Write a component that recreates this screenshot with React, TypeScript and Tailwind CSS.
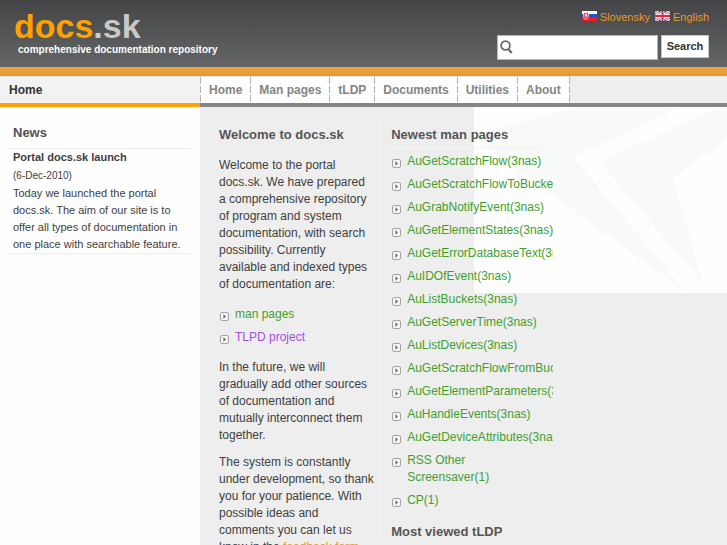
import type { ReactNode } from 'react';

type BulletLinkProps = {
  href?: string;
  className?: string;
  children: ReactNode;
};

const navItems = ['Home', 'Man pages', 'tLDP', 'Documents', 'Utilities', 'About'];

const manPages = [
  'AuGetScratchFlow(3nas)',
  'AuGetScratchFlowToBucket(3nas)',
  'AuGrabNotifyEvent(3nas)',
  'AuGetElementStates(3nas)',
  'AuGetErrorDatabaseText(3nas)',
  'AuIDOfEvent(3nas)',
  'AuListBuckets(3nas)',
  'AuGetServerTime(3nas)',
  'AuListDevices(3nas)',
  'AuGetScratchFlowFromBucket(3nas)',
  'AuGetElementParameters(3nas)',
  'AuHandleEvents(3nas)',
  'AuGetDeviceAttributes(3nas)',
  'RSS Other Screensaver(1)',
  'CP(1)',
];

function SlovakFlag() {
  return (
    <svg className="mb-[3px]" width="15" height="10" viewBox="0 0 15 10" aria-hidden="true">
      <rect width="15" height="10" fill="#ffffff" />
      <rect y="3" width="15" height="4" fill="#2457c5" />
      <rect y="7" width="15" height="3" fill="#ee1c25" />
      <path d="M1.5 1.5h5v4c0 1.6-1.2 2.4-2.5 3-1.3-.6-2.5-1.4-2.5-3z" fill="#e8323c" stroke="#fff" strokeWidth=".6" />
      <path d="M4 2.3v4M2.9 3.4h2.2M2.5 4.9h3" stroke="#fff" strokeWidth=".8" />
    </svg>
  );
}

function BritishFlag() {
  return (
    <svg className="mb-[3px]" width="15" height="10" viewBox="0 0 15 10" aria-hidden="true">
      <rect width="15" height="10" fill="#3a54a4" />
      <path d="M0 0l15 10M15 0L0 10" stroke="#ffffff" strokeWidth="2.8" />
      <path d="M0 0l15 10M15 0L0 10" stroke="#e2405a" strokeWidth="1" />
      <path d="M7.5 0v10M0 5h15" stroke="#ffffff" strokeWidth="3.6" />
      <path d="M7.5 0v10M0 5h15" stroke="#dc2840" strokeWidth="2" />
    </svg>
  );
}

function SearchIcon() {
  return (
    <svg className="mb-[2px] shrink-0" width="13" height="14" viewBox="0 0 13 14" fill="none" stroke="#686868" aria-hidden="true">
      <circle cx="5.5" cy="5.5" r="4.4" strokeWidth="1.7" />
      <path d="M8.3 9l3.4 4" strokeWidth="2.2" />
    </svg>
  );
}

function BulletIcon() {
  return (
    <svg className="mt-[6px] shrink-0" width="9" height="9" viewBox="0 0 9 9" aria-hidden="true">
      <rect x=".5" y=".5" width="8" height="8" rx="1.5" fill="#f6f6f6" stroke="#a3a3a3" />
      <path d="M3.4 2.3L6.2 4.5 3.4 6.7z" fill="#707070" />
    </svg>
  );
}

function BulletLink({ href = '#', className = 'text-[#3fa02c]', children }: BulletLinkProps) {
  return (
    <li className="flex gap-[6px] pl-px">
      <BulletIcon />
      <a href={href} className={className}>
        {children}
      </a>
    </li>
  );
}

// Faint star in the top right corner of the content
function Backdrop() {
  return (
    <svg className="absolute right-0 top-0" width="253" height="186" viewBox="0 0 253 186" aria-hidden="true">
      <rect width="253" height="186" fill="#fefefe" />
      <path d="M0 28L99 1h104L99 50l114 136L0 31z" fill="#f8faf8" />
      <path d="M243 1h10v30l-54 40 29 104L126 55z" fill="#f8faf8" />
    </svg>
  );
}

function Header() {
  return (
    <header className="flex h-[67px] justify-between bg-linear-to-b from-[#434445] to-[#656668] pl-[14px] pr-[18px]">
      <div className="pt-[9px]">
        <a href="#" className="block text-[34px] font-bold leading-[34px] text-[#ffa200]">
          docs<span className="text-[#c9c9c9]">.sk</span>
        </a>
        <p className="pl-1 text-[10px] font-bold leading-[14px] text-white">
          comprehensive documentation repository
        </p>
      </div>
      <div className="flex flex-col items-end gap-[9px] pt-[9px]">
        <div className="flex gap-[5px] text-[11px] leading-[17px] text-[#e69b29]">
          <a href="#" className="flex items-center gap-[3px]">
            <SlovakFlag />
            Slovensky
          </a>
          <a href="#" className="flex items-center gap-[3px]">
            <BritishFlag />
            English
          </a>
        </div>
        <form className="flex items-start gap-[3px]">
          <label className="flex h-[25px] w-[161px] items-center border border-[#b5b5b5] bg-white pl-[2px]">
            <SearchIcon />
            <input type="text" aria-label="Search" className="min-w-0 flex-1 px-1 text-[#333] outline-none" />
          </label>
          <button type="button" className="h-[23px] w-12 border border-[#c4c4c4] bg-white text-[11px] font-bold text-[#333]">
            Search
          </button>
        </form>
      </div>
    </header>
  );
}

function Navigation() {
  return (
    <div className="grid grid-cols-[200px_1fr] border-t border-[#e3e3e3] bg-[#efefef] font-bold leading-[26px]">
      <div className="border-b-4 border-[#ffa200] bg-[#f2f2f2] pl-[9px] text-[#333]">Home</div>
      <nav className="flex border-b-4 border-[#858685]">
        <span className="w-px bg-[repeating-linear-gradient(#b5b5b5_0_7px,#fefefe_7px_9px)]" />
        {navItems.map((item) => (
          <a
            key={item}
            href="#"
            className="bg-[#fefefe] bg-[repeating-linear-gradient(#b5b5b5_0_7px,#fefefe_7px_9px)] bg-[length:1px_100%] bg-right bg-no-repeat pl-2 pr-[9px] text-[#858585]"
          >
            {item}
          </a>
        ))}
      </nav>
    </div>
  );
}

function News() {
  return (
    <aside className="bg-[#fefefe] px-[9px] pt-[17px]">
      <h2 className="border-b border-[#efefef] px-1 pb-[7px] text-[13px] font-bold leading-[17px] text-[#505050]">News</h2>
      <article className="border-b border-[#efefef] px-1 text-[11px] leading-[17px]">
        <h3 className="font-bold">Portal docs.sk launch</h3>
        <p className="text-[10px] leading-[19px]">(6-Dec-2010)</p>
        <p>
          Today we launched the portal docs.sk. The aim of our site is to offer all types of documentation in one
          place with searchable feature.
        </p>
      </article>
    </aside>
  );
}

function Welcome() {
  return (
    <section className="pl-[19px] pr-2 pt-[19px] leading-[17px]">
      <h1 className="text-[13px] font-bold leading-[17px] text-[#555]">Welcome to docs.sk</h1>
      <p className="mt-[14px]">
        Welcome to the portal docs.sk. We have prepared a&nbsp;comprehensive repository of program and system
        documentation, with search possibility. Currently available and indexed types of documentation are:
      </p>
      <ul className="my-[13px] flex flex-col gap-[6px]">
        <BulletLink>man pages</BulletLink>
        <BulletLink className="text-[#a34fe0]">TLPD project</BulletLink>
      </ul>
      <p className="mb-[10px]">
        In the future, we will gradually add other sources of documentation and mutually interconnect them together.
      </p>
      <p className="-mr-1">
        The system is constantly under development, so thank you for your patience. With possible ideas and comments
        you can let us know in the{' '}
        <a href="#" className="text-[#ee9a22]">
          feedback form
        </a>
        .
      </p>
    </section>
  );
}

function ManPages() {
  return (
    <section className="overflow-hidden border-l-2 border-[#f2f2f2] pl-[10px] leading-[17px]">
      <h2 className="mr-[10px] border-b border-[#f3f2f3] pb-1 text-[13px] font-bold leading-[17px] text-[#555]">
        Newest man pages
      </h2>
      <ul className="mb-[14px] mr-[10px] mt-[5px] flex flex-col gap-[6px]">
        {manPages.map((page) => (
          <BulletLink key={page}>{page}</BulletLink>
        ))}
      </ul>
      <h2 className="text-[13px] font-bold leading-[17px] text-[#555]">Most viewed tLDP</h2>
    </section>
  );
}

export default function App() {
  return (
    <div className="flex min-h-screen flex-col bg-[#eeeeee] font-['Liberation_Sans',Arial,sans-serif] text-[12px] text-[#404040]">
      <Header />
      <div className="h-[9px] bg-linear-to-b from-[#f0a538] to-[#e19a38]" />
      <Navigation />
      <div className="grid flex-1 grid-cols-[200px_1fr]">
        <News />
        <main className="relative">
          <Backdrop />
          <div className="relative grid grid-cols-[34fr_33fr_33fr]">
            <Welcome />
            <div className="min-w-0 pt-[19px]">
              <ManPages />
            </div>
          </div>
        </main>
      </div>
    </div>
  );
}
